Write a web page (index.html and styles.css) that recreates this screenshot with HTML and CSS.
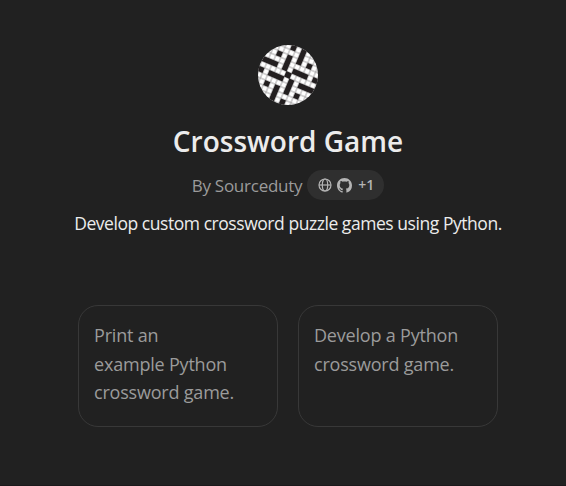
FILE: index.html
```html
<!DOCTYPE html>
<html lang="en">
<head>
<meta charset="utf-8">
<title>Crossword Game</title>
<link rel="stylesheet" href="styles.css">
</head>
<body>
<main class="page">
  <svg class="avatar" viewBox="-30 -30 60 60" aria-hidden="true">
    <defs>
      <clipPath id="disc"><circle r="30"/></clipPath>
      <pattern id="cells" x="-2.7" y="-2.7" width="5.4" height="5.4" patternUnits="userSpaceOnUse">
        <rect width="5.4" height="5.4" fill="#969495"/>
        <rect x=".4" y=".4" width="4.6" height="4.6" fill="#fff"/>
      </pattern>
    </defs>
    <g clip-path="url(#disc)">
      <g transform="rotate(23)">
        <rect x="-40" y="-40" width="80" height="80" fill="url(#cells)"/>
        <g transform="scale(5.4)" fill="#231f20">
          <rect x="-.55" y="-.55" width="1.1" height="1.1"/>
          <g id="arm">
            <rect x=".5" y="-1.5" width="3" height="1"/>
            <rect x="2.5" y=".5" width="3" height="1"/>
            <rect x="2.5" y="-3.5" width="1" height="1"/>
            <rect x="4.5" y="-1.5" width="2" height="1"/>
          </g>
          <use href="#arm" transform="rotate(90)"/>
          <use href="#arm" transform="rotate(180)"/>
          <use href="#arm" transform="rotate(270)"/>
        </g>
      </g>
    </g>
  </svg>
  <h1 class="title">Crossword Game</h1>
  <div class="byline">
    <span class="author">By Sourceduty</span>
    <span class="badge">
      <svg class="globe" viewBox="0 0 14 14" fill="none" stroke="currentColor" stroke-width="1.2" aria-hidden="true">
        <circle cx="7" cy="7" r="6"/><ellipse cx="7" cy="7" rx="2.7" ry="6"/><path d="M1 7h12"/>
      </svg>
      <svg class="github" viewBox="0 0 16 16" fill="currentColor" aria-hidden="true">
        <path d="M8 0C3.58 0 0 3.58 0 8c0 3.54 2.29 6.53 5.47 7.59.4.07.55-.17.55-.38 0-.19-.01-.82-.01-1.49-2.01.37-2.53-.49-2.69-.94-.09-.23-.48-.94-.82-1.13-.28-.15-.68-.52-.01-.53.63-.01 1.08.58 1.23.82.72 1.21 1.87.87 2.33.66.07-.52.28-.87.51-1.07-1.78-.2-3.64-.89-3.64-3.95 0-.87.31-1.59.82-2.15-.08-.2-.36-1.02.08-2.12 0 0 .67-.21 2.2.82.64-.18 1.32-.27 2-.27s1.36.09 2 .27c1.53-1.04 2.2-.82 2.2-.82.44 1.1.16 1.92.08 2.12.51.56.82 1.27.82 2.15 0 3.07-1.87 3.75-3.65 3.95.29.25.54.73.54 1.48 0 1.07-.01 1.93-.01 2.2 0 .21.15.46.55.38A8.01 8.01 0 0 0 16 8c0-4.42-3.58-8-8-8Z"/>
      </svg>
      <span class="more">+1</span>
    </span>
  </div>
  <p class="description">Develop custom crossword puzzle games using Python.</p>
  <div class="cards">
    <div class="card">Print an<br>example Python<br>crossword game.</div>
    <div class="card">Develop a Python<br>crossword game.</div>
  </div>
</main>
</body>
</html>
```
FILE: styles.css
```css
* { box-sizing: border-box; }
body {
  margin: 0;
  background: #212121;
  color: #ececec;
  font-family: "Open Sans", "Noto Sans", sans-serif;
}
.page {
  display: flex;
  flex-direction: column;
  align-items: center;
  height: 486px;
  padding: 44.5px 0 0 10px;
  border-bottom: 1px solid #1b191b;
}
.avatar { display: block; width: 60px; height: 60px; flex: none; }
.title {
  margin: 18.5px 0 0;
  font-size: 28px;
  line-height: 36px;
  font-weight: 600;
  white-space: nowrap;
}
.byline {
  display: flex;
  align-items: center;
  gap: 5px;
  height: 30px;
  margin-top: 11px;
}
.author {
  padding-top: 2px;
  color: #9b9b9b;
  font-size: 17px;
  line-height: 28px;
  letter-spacing: -.25px;
  white-space: nowrap;
}
.badge {
  display: flex;
  align-items: center;
  width: 77px;
  height: 30px;
  padding-left: 11px;
  border-radius: 15px;
  background: #2f2f2f;
  color: #b4b4b4;
}
.globe { width: 14px; height: 14px; margin-right: 5px; }
.github { width: 15px; height: 15px; margin-right: 6px; }
.more { font-size: 14px; font-weight: 600; line-height: 20px; }
.description {
  margin: 9px 0 0;
  font-size: 17.5px;
  line-height: 28px;
  letter-spacing: -.45px;
  white-space: nowrap;
}
.cards {
  display: grid;
  grid-template-columns: 200px 200px;
  gap: 20px;
  margin-top: 68px;
}
.card {
  height: 122px;
  padding: 15px;
  border: 1px solid #383838;
  border-radius: 20px;
  color: #9b9b9b;
  font-size: 18px;
  line-height: 28.6px;
  letter-spacing: -.2px;
  white-space: nowrap;
}
```
